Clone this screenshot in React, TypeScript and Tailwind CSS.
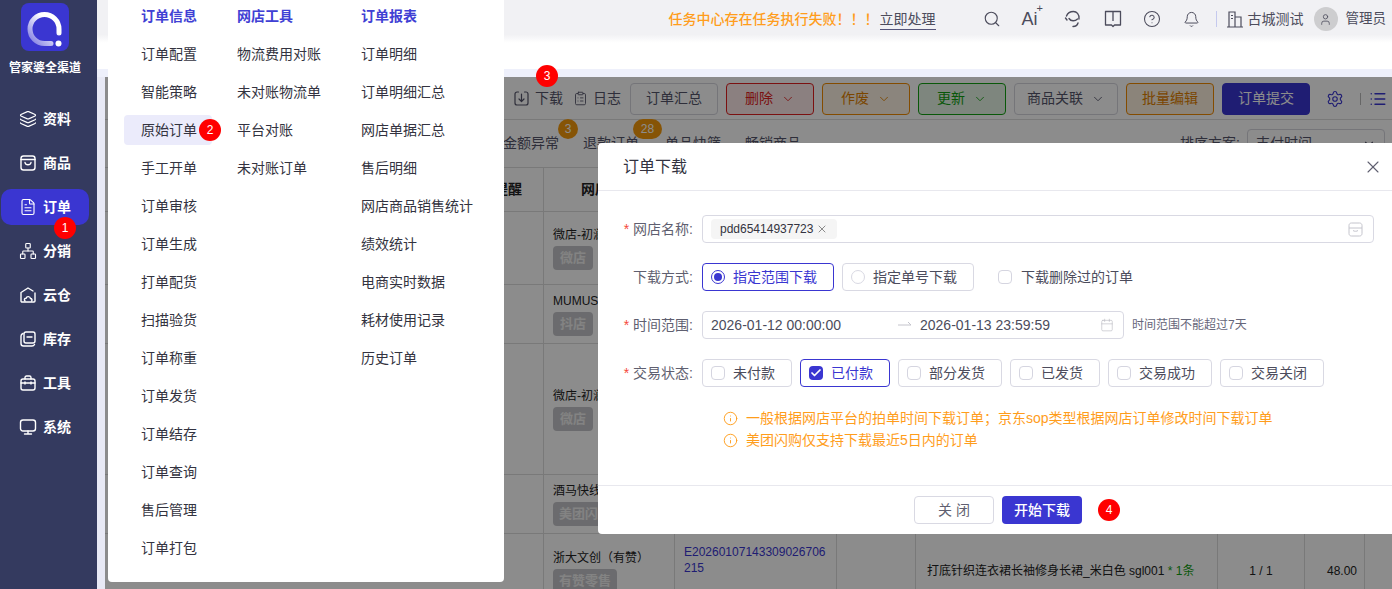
import React from "react";
import { Search, Bell, CircleHelp, Check, ChevronDown, X, Calendar, Info, List, User, Layers, FileText, Network, ClipboardList, Settings } from "lucide-react";

const font = { fontFamily: '"Liberation Sans","Noto Sans CJK SC",sans-serif' };

function Dot({ n, className }: { n: number; className: string }) {
  return (
    <span className={"absolute z-50 flex h-[22px] w-[22px] items-center justify-center rounded-full bg-[#ff0000] text-[12px] font-normal text-white " + className}>
      {n}
    </span>
  );
}

const SI = ({ children }: { children: React.ReactNode }) => (
  <svg width="18" height="18" viewBox="0 0 18 18" fill="none" stroke="white" strokeWidth="1.4" strokeLinejoin="round" strokeLinecap="round">
    {children}
  </svg>
);

const side: [string, React.ReactNode][] = [
  ["资料", <Layers size={18} color="white" strokeWidth={1.5} />],
  ["商品", <SI><rect x="2" y="2" width="14" height="14" rx="2.5" /><path d="M2 5.5h14M6 8.5c.5 3 5.500 3 6 0" /></SI>],
  ["订单", <FileText size={18} color="white" strokeWidth={1.5} />],
  ["分销", <Network size={18} color="white" strokeWidth={1.5} />],
  ["云仓", <SI><path d="M16 7v8a1 1 0 0 1-1 1H3a1 1 0 0 1-1-1V6.500L9 2l5 3" /><path d="M6 15c-1.500-1.500 0-3 1.200-2.800C7.600 10 11 10 11.500 12.500c1.500 0 2 1.800 1 2.500" /></SI>],
  ["库存", <SI><path d="M4 3.500C2.500 4 2 5 2 6v7.500C2 15 3 16 4.500 16H13c1 0 2-.5 2.500-1.500" /><rect x="5" y="2" width="11" height="11" rx="2" /><path d="M8 7h5" /></SI>],
  ["工具", <SI><path d="M6 5V3.500C6 2.700 6.700 2 7.500 2h3c.8 0 1.500.7 1.500 1.500V5" /><rect x="2" y="5" width="14" height="11" rx="2" /><path d="M2 9h14M6 8v2M12 8v2" /></SI>],
  ["系统", <SI><rect x="1.500" y="2" width="15" height="11" rx="2.500" /><path d="M9 13v3M5.500 16h7" /></SI>],
];

const col1 = ["订单配置", "智能策略", "原始订单", "手工开单", "订单审核", "订单生成", "打单配货", "扫描验货", "订单称重", "订单发货", "订单结存", "订单查询", "售后管理", "订单打包"];
const col2 = ["物流费用对账", "未对账物流单", "平台对账", "未对账订单"];
const col3 = ["订单明细", "订单明细汇总", "网店单据汇总", "售后明细", "网店商品销售统计", "绩效统计", "电商实时数据", "耗材使用记录", "历史订单"];

function Col({ title, items, w }: { title: string; items: string[]; w: string }) {
  return (
    <div className={w}>
      <div className="flex h-[38px] items-center text-[14px] font-bold text-[#4040d4]">{title}</div>
      {items.map((t) => (
        <div key={t} className="relative flex h-[38px] items-center whitespace-nowrap text-[14px] text-[#333340]">
          {t === "原始订单" && <span className="absolute left-[-17px] top-[4px] h-[30px] w-[88px] rounded bg-[#ebebfb]" />}
          <span className="relative">{t}</span>
          {t === "原始订单" && <Dot n={2} className="left-[58px] top-[8px]" />}
        </div>
      ))}
    </div>
  );
}

function TBtn({ label, cls, arrow }: { label: string; cls: string; arrow?: boolean }) {
  return (
    <div className={"flex h-[32px] items-center justify-center gap-[8px] rounded border text-[14px] " + cls}>
      {label}
      {arrow && <ChevronDown size={14} strokeWidth={1.5} />}
    </div>
  );
}

function Tag({ t, w }: { t: string; w: string }) {
  return <div className={"mt-[2px] flex h-[24px] items-center justify-center rounded-sm bg-[#c4c4c8] text-[13px] font-bold text-[#eeeeee] " + w}>{t}</div>;
}

function Shop({ name, tag, w, h }: { name: string; tag: string; w: string; h: string }) {
  return (
    <div className={"flex items-center border-b border-[#dcdcdc] " + h}>
      <div className="w-[439px] shrink-0 self-stretch border-r border-[#dcdcdc]" />
      <div className="w-[131px] shrink-0 self-stretch border-r border-[#dcdcdc]">
        <div className="flex h-full flex-col justify-center pl-[9px]">
          <div className="whitespace-nowrap text-[12px] leading-[18px] text-[#222]">{name}</div>
          <Tag t={tag} w={w} />
        </div>
      </div>
      <div className="w-[162px] shrink-0 self-stretch border-r border-[#dcdcdc]" />
      <div className="w-[79px] shrink-0 self-stretch border-r border-[#dcdcdc]" />
      <div className="w-[302px] shrink-0 self-stretch border-r border-[#dcdcdc]" />
      <div className="w-[87px] shrink-0 self-stretch border-r border-[#dcdcdc]" />
      <div className="w-[60px] shrink-0 self-stretch border-r border-[#dcdcdc]" />
    </div>
  );
}

function Box({ checked }: { checked?: boolean }) {
  return checked ? (
    <span className="flex h-[14px] w-[14px] items-center justify-center rounded-sm bg-[#3a36d1]">
      <Check size={12} color="white" strokeWidth={3.500} />
    </span>
  ) : (
    <span className="h-[14px] w-[14px] rounded-sm border border-[#d5d5e0] bg-white" />
  );
}

function Label({ t, star }: { t: string; star?: boolean }) {
  return (
    <div className="mr-[9px] w-[95px] shrink-0 whitespace-nowrap text-right text-[14px] text-[#5f5f70]">
      {star && <span className="mr-[4px] text-[#f5483b]">*</span>}
      {t}:
    </div>
  );
}

function Status({ t, w, checked }: { t: string; w: string; checked?: boolean }) {
  return (
    <div className={"flex h-[28px] items-center gap-[8px] rounded border pl-[8px] text-[14px] " + w + (checked ? " border-[#3a36d1] text-[#3a36d1]" : " border-[#d9d9e3] text-[#4c4c5c]")}>
      <Box checked={checked} />
      {t}
    </div>
  );
}

export default function App() {
  return (
    <div className="relative flex h-[589px] w-[1392px] overflow-hidden bg-white" style={font}>
      <aside className="flex w-[97px] shrink-0 flex-col bg-[#343a5f]">
        <div className="flex flex-col items-center pr-[7px]">
          <div className="mt-[3px] h-[48px] w-[48px] rounded-lg bg-[#3a36d1]">
            <svg width="48" height="48" viewBox="0 0 48 48" fill="none">
              <defs>
                <linearGradient id="lg" x1="38" y1="12" x2="12" y2="38" gradientUnits="userSpaceOnUse">
                  <stop offset="0.35" stopColor="#ffffff" />
                  <stop offset="1" stopColor="#8f8ce6" />
                </linearGradient>
              </defs>
              <path d="M38 30V26A14.500 14.500 0 1 0 23.500 40.500H30" stroke="url(#lg)" strokeWidth="5" strokeLinecap="round" />
              <circle cx="37.500" cy="40.500" r="3" fill="white" />
            </svg>
          </div>
          <div className="mt-[9px] whitespace-nowrap text-[12px] font-bold leading-[16px] text-white">管家婆全渠道</div>
        </div>
        <nav className="mt-[21px] flex w-full flex-col">
          {side.map(([t, icon]) => (
            <div key={t} className="relative flex h-[44px] items-center pl-[19px]">
              {t === "订单" && <span className="absolute left-[1px] top-[4px] h-[36px] w-[88px] rounded-[10px] bg-[#3a36d1]" />}
              <span className="relative mr-[6px] flex">{icon}</span>
              <span className="relative text-[14px] font-bold text-white">{t}</span>
              {t === "订单" && <Dot n={1} className="left-[54px] top-[32px]" />}
            </div>
          ))}
        </nav>
      </aside>

      <main className="flex min-w-0 flex-1 flex-col">
        <header className="h-[69px] shrink-0 bg-gradient-to-b from-[#f1f1f4] from-[50%] to-white to-[62%]">
          <div className="flex h-[38px] items-center justify-end pr-[6px] text-[#4c4c5c]">
            <span className="mr-[1px] text-[14px] font-medium text-[#ff9d1c]">任务中心存在任务执行失败！！！</span>
            <span className="mr-[47px] border-b border-[#55557a] text-[14px] leading-[20px]">立即处理</span>
            <Search size={18} strokeWidth={1.5} className="mr-[21px]" />
            <span className="relative mr-[20px] flex w-[22px] text-[18px] leading-none">
              Ai
              <span className="absolute left-[15px] top-[-7px] text-[11px]">+</span>
            </span>
            <svg width="18" height="18" viewBox="0 0 18 18" fill="none" stroke="currentColor" strokeWidth="1.4" strokeLinecap="round" className="mr-[22px]">
              <path d="M2.500 6C4 2 6.500 1.500 9.500 1.500c3 0 6 2.500 5.500 7.500M5 8.500c2 3 6 3 8.500 0.500M1.500 8l1.500 2M9 16.500c3 0 4.500-1.500 5-3.500" />
            </svg>
            <svg width="18" height="18" viewBox="0 0 18 18" fill="none" stroke="currentColor" strokeWidth="1.3" strokeLinejoin="round" className="mr-[21px]">
              <path d="M1.500 1.500h15v13.500H10.500L9 16.500 7.500 15H1.500zM9 1.500V11" />
            </svg>
            <CircleHelp size={18} strokeWidth={1.4} className="mr-[22px]" />
            <Bell size={17} strokeWidth={1.4} className="mr-[16px]" />
            <span className="mr-[10px] h-[16px] w-px bg-[#c5c9ee]" />
            <svg width="17" height="17" viewBox="0 0 17 17" fill="none" stroke="currentColor" strokeWidth="1.2" className="mr-[4px]">
              <path d="M0 16h16M2 16V1h6v15M8 6h6v10M4 4.500h2M4 7.500h2" />
            </svg>
            <span className="mr-[10px] whitespace-nowrap text-[14px]">古城测试</span>
            <span className="mr-[8px] flex h-[24px] w-[24px] items-center justify-center rounded-full bg-[#cdcdcf]">
              <User size={13} strokeWidth={1.5} />
            </span>
            <span className="whitespace-nowrap text-[13.500px]">管理员</span>
          </div>
        </header>
        <div className="h-[8px] shrink-0 bg-[#eef0fb]" />
        <div className="flex min-h-0 flex-1 bg-[#e8e9f5] pl-[8px]">
          <div className="min-w-0 flex-1 bg-white">
            <div className="flex h-[43px] items-center justify-end border-b border-[#dcdcdc] pr-[5px] pt-[1px] text-[#55556a]">
              <svg width="15" height="15" viewBox="0 0 15 15" fill="none" stroke="currentColor" strokeWidth="1.2" strokeLinecap="round" strokeLinejoin="round" className="mr-[6px]">
                <path d="M4.500 1H3a2 2 0 0 0-2 2v9a2 2 0 0 0 2 2h9a2 2 0 0 0 2-2V3a2 2 0 0 0-2-2h-1.500M7.500 3v7M5 8l2.500 2.500L10 8" />
              </svg>
              <span className="mr-[10px] text-[14px]">下载</span>
              <ClipboardList size={15} strokeWidth={1.4} className="mr-[5px]" />
              <span className="mr-[9px] text-[14px]">日志</span>
              <div className="flex gap-[8px]">
                <TBtn label="订单汇总" cls="w-[88px] border-[#d5d5dd]" />
                <TBtn label="删除" arrow cls="w-[88px] border-[#e02020] bg-[#fdeaea] text-[#e02020]" />
                <TBtn label="作废" arrow cls="w-[88px] border-[#f08a00] bg-[#fdf3e3] text-[#e08000]" />
                <TBtn label="更新" arrow cls="w-[88px] border-[#12a012] bg-[#e6f5e6] text-[#12a012]" />
                <TBtn label="商品关联" arrow cls="w-[104px] border-[#d5d5dd]" />
                <TBtn label="批量编辑" cls="w-[88px] border-[#f08a00] bg-[#fdf0de] text-[#e08000]" />
                <TBtn label="订单提交" cls="w-[88px] border-[#3a36d1] bg-[#3a36d1] text-white" />
              </div>
              <Settings size={18} color="#3a36d1" strokeWidth={1.5} className="ml-[16px] mr-[16px]" />
              <span className="mr-[8px] h-[12px] w-px bg-[#bbb]" />
              <List size={18} color="#3a36d1" strokeWidth={2} />
            </div>
            <div className="flex h-[48px] items-center border-b border-[#dcdcdc] pl-[398px] text-[14px] text-[#55556a]">
              <span className="relative mr-[24px] whitespace-nowrap">
                金额异常
                <span className="absolute left-[55px] top-[-14px] flex h-[20px] w-[20px] items-center justify-center rounded-full bg-[#f59a0c] text-[12px] text-white">3</span>
              </span>
              <span className="relative mr-[26px] whitespace-nowrap">
                退款订单
                <span className="absolute left-[50px] top-[-14px] flex h-[20px] w-[29px] items-center justify-center rounded-full bg-[#f59a0c] text-[12px] text-white">28</span>
              </span>
              <span className="mr-[24px] whitespace-nowrap">单品快筛</span>
              <span className="whitespace-nowrap">畅销商品</span>
              <span className="ml-auto mr-[7px] whitespace-nowrap">排序方案:</span>
              <span className="mr-[7px] flex h-[30px] w-[138px] items-center justify-between rounded border border-[#d5d5dd] px-[8px]">
                支付时间
                <ChevronDown size={14} />
              </span>
            </div>
            <div className="flex h-[44px] items-center border-b border-[#dcdcdc] text-[14px] font-bold text-[#222]">
              <div className="flex h-full w-[439px] shrink-0 items-center justify-end border-r border-[#dcdcdc] pr-[21px]">提醒</div>
              <div className="flex h-full w-[131px] shrink-0 items-center justify-center border-r border-[#dcdcdc]">网店名称</div>
              <div className="h-full w-[162px] shrink-0 border-r border-[#dcdcdc]" />
              <div className="h-full w-[79px] shrink-0 border-r border-[#dcdcdc]" />
              <div className="h-full w-[302px] shrink-0 border-r border-[#dcdcdc]" />
              <div className="h-full w-[87px] shrink-0 border-r border-[#dcdcdc]" />
              <div className="h-full w-[60px] shrink-0 border-r border-[#dcdcdc]" />
            </div>
            <Shop name="微店-初澜" tag="微店" w="w-[40px]" h="h-[73px]" />
            <Shop name="MUMUSE" tag="抖店" w="w-[40px]" h="h-[59px]" />
            <Shop name="微店-初澜" tag="微店" w="w-[40px]" h="h-[131px]" />
            <Shop name="酒马快线" tag="美团闪购" w="w-[64px]" h="h-[59px]" />
            <div className="flex h-[55px]">
              <div className="w-[439px] shrink-0 border-r border-[#dcdcdc]" />
              <div className="w-[131px] shrink-0 border-r border-[#dcdcdc] pl-[9px] pt-[15px]">
                <div className="whitespace-nowrap text-[12px] leading-[18px] text-[#222]">浙大文创（有赞）</div>
                <Tag t="有赞零售" w="w-[64px]" />
              </div>
              <div className="w-[162px] shrink-0 break-all border-r border-[#dcdcdc] pl-[9px] pr-[8px] pt-[10px] text-[12px] leading-[16px] text-[#3a36d1]">E20260107143309026706215</div>
              <div className="w-[79px] shrink-0 border-r border-[#dcdcdc]" />
              <div className="flex w-[302px] shrink-0 items-start whitespace-nowrap border-r border-[#dcdcdc] pl-[11px] pt-[28px] text-[12px] text-[#222]">
                打底针织连衣裙长袖修身长裙_米白色 sgl001&nbsp;<span className="text-[#12a012]">* 1条</span>
              </div>
              <div className="flex w-[87px] shrink-0 justify-center border-r border-[#dcdcdc] pt-[28px] text-[12px] text-[#222]">1 / 1</div>
              <div className="flex w-[60px] shrink-0 justify-end border-r border-[#dcdcdc] pr-[7px] pt-[28px] text-[12px] text-[#222]">48.00</div>
            </div>
          </div>
        </div>
      </main>

      <div className="absolute bottom-0 left-[105px] right-0 top-[77px] bg-black/45" />

      <div className="absolute left-[108px] top-0 z-10 flex h-[582px] w-[396px] rounded-b-sm bg-white pl-[33px]">
        <div className="mt-[-3px] flex">
          <Col title="订单信息" items={col1} w="w-[96px]" />
          <Col title="网店工具" items={col2} w="w-[124px]" />
          <Col title="订单报表" items={col3} w="w-[130px]" />
        </div>
      </div>

      <Dot n={3} className="left-[536px] top-[65px]" />

      <section className="absolute bottom-[55px] left-[598px] right-0 top-[143px] z-20 flex flex-col rounded-l-sm bg-white">
        <div className="flex h-[48px] shrink-0 items-center justify-between border-b border-[#e8e8ee] pl-[25px] pr-[9px]">
          <span className="text-[16px] text-[#333340]">订单下载</span>
          <X size={20} strokeWidth={1.3} color="#5f5f70" />
        </div>
        <div className="flex flex-1 flex-col gap-[20px] pt-[24px]">
          <div className="flex items-center">
            <Label t="网店名称" star />
            <div className="flex h-[28px] w-[672px] items-center justify-between rounded border border-[#d9d9e3] pl-[8px] pr-[10px]">
              <span className="flex h-[20px] items-center gap-[3px] rounded-sm bg-[#f5f5f5] px-[9px] text-[12px] text-[#333340]">
                pdd65414937723
                <X size={12} strokeWidth={1.5} color="#666" />
              </span>
              <svg width="15" height="15" viewBox="0 0 15 15" fill="none" stroke="#c4c4cc" strokeWidth="1">
                <path d="M1 6V3.500C1 2 2 1 3.500 1h8C13 1 14 2 14 3.500V6M1 6h13M1 6v5.500C1 13 2 14 3.500 14h8c1.500 0 2.500-1 2.500-2.500V6M5 8.500c1 1 4 1 5 0" />
              </svg>
            </div>
          </div>
          <div className="flex items-center">
            <Label t="下载方式" />
            <div className="flex h-[28px] w-[132px] items-center gap-[8px] rounded border border-[#3a36d1] pl-[8px] text-[14px] text-[#3a36d1]">
              <span className="flex h-[14px] w-[14px] items-center justify-center rounded-full border border-[#3a36d1]">
                <span className="h-[8px] w-[8px] rounded-full bg-[#3a36d1]" />
              </span>
              指定范围下载
            </div>
            <div className="ml-[8px] flex h-[28px] w-[132px] items-center gap-[8px] rounded border border-[#d9d9e3] pl-[8px] text-[14px] text-[#4c4c5c]">
              <span className="h-[14px] w-[14px] rounded-full border border-[#d9d9e3]" />
              指定单号下载
            </div>
            <span className="ml-[24px] mr-[9px] flex">
              <Box />
            </span>
            <span className="text-[14px] text-[#4c4c5c]">下载删除过的订单</span>
          </div>
          <div className="flex items-center">
            <Label t="时间范围" star />
            <div className="flex h-[28px] w-[422px] items-center rounded border border-[#d9d9e3] pl-[8px] pr-[9px] text-[14px] text-[#4c4c5c]">
              <span className="w-[186px]">2026-01-12 00:00:00</span>
              <svg width="16" height="8" viewBox="0 0 16 8" fill="none" stroke="#c4c4cc" strokeWidth="1" className="mr-[7px]">
                <path d="M1 4h13M11 1l3 3" />
              </svg>
              <span className="flex-1">2026-01-13 23:59:59</span>
              <Calendar size={14} strokeWidth={1} color="#b5b5bd" />
            </div>
            <span className="ml-[8px] text-[12px] text-[#66667a]">时间范围不能超过7天</span>
          </div>
          <div className="flex items-center gap-[8px]">
            <div className="mr-[-8px]">
              <Label t="交易状态" star />
            </div>
            <Status t="未付款" w="w-[90px]" />
            <Status t="已付款" w="w-[90px]" checked />
            <Status t="部分发货" w="w-[104px]" />
            <Status t="已发货" w="w-[90px]" />
            <Status t="交易成功" w="w-[104px]" />
            <Status t="交易关闭" w="w-[104px]" />
          </div>
          <div className="ml-[125px] mt-[1px] flex flex-col gap-[2px] text-[14px] leading-[20px] text-[#ff9d1c]">
            <div className="flex items-center gap-[8px]">
              <Info size={15} strokeWidth={1.5} />
              一般根据网店平台的拍单时间下载订单；京东sop类型根据网店订单修改时间下载订单
            </div>
            <div className="flex items-center gap-[8px]">
              <Info size={15} strokeWidth={1.5} />
              美团闪购仅支持下载最近5日内的订单
            </div>
          </div>
        </div>
        <div className="flex h-[49px] shrink-0 items-center border-t border-[#e8e8ee] pl-[316px]">
          <div className="flex h-[28px] w-[80px] items-center justify-center rounded border border-[#d9d9e3] text-[14px] text-[#5f5f70]">关 闭</div>
          <div className="ml-[8px] flex h-[28px] w-[80px] items-center justify-center rounded bg-[#3a36d1] text-[14px] font-medium text-white">开始下载</div>
          <span className="relative ml-[16px] h-[22px] w-[22px]">
            <Dot n={4} className="left-0 top-0" />
          </span>
        </div>
      </section>
    </div>
  );
}
